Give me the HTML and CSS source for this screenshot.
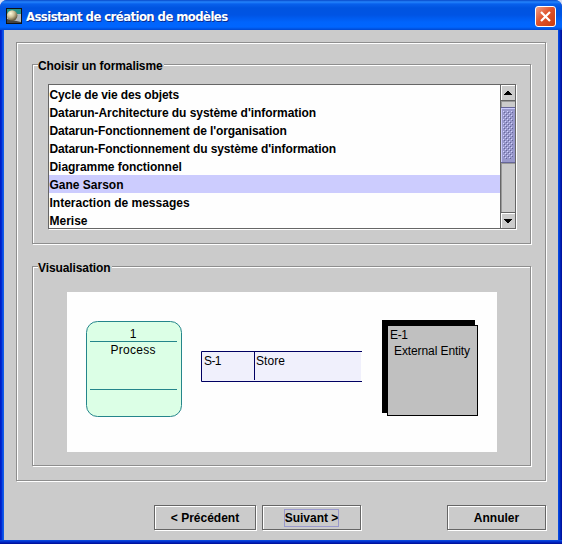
FILE: index.html
```
<!DOCTYPE html>
<html lang="fr">
<head>
<meta charset="utf-8">
<title>Assistant de création de modèles</title>
<link rel="stylesheet" href="styles.css">
</head>
<body>
<div class="window">
  <header class="titlebar">
    <svg class="app-icon" width="16" height="16" viewBox="0 0 16 16">
      <defs><radialGradient id="ball" cx=".35" cy=".3" r=".8"><stop offset="0" stop-color="#fffde0"/><stop offset=".45" stop-color="#cbbf96"/><stop offset="1" stop-color="#4a4028"/></radialGradient></defs>
      <rect width="16" height="16" fill="#111"/>
      <rect x="1" y="1" width="14" height="5" fill="#259088"/>
      <rect x="1" y="6" width="14" height="9" fill="#b4babc"/>
      <path d="M1 15V11L15 14V15Z" fill="#444"/>
      <circle cx="6.200" cy="7.500" r="5.200" fill="url(#ball)"/>
    </svg>
    <h1 class="title">Assistant de création de modèles</h1>
    <button class="close" aria-label="Fermer">
      <svg width="19" height="19" viewBox="0 0 19 19"><path d="M5 5L14 14M14 5L5 14" stroke="#fff" stroke-width="2.2"/></svg>
    </button>
  </header>
  <main class="content">
    <section class="panel">
      <section class="group group-list">
        <h2 class="legend legend-list">Choisir un formalisme</h2>
        <div class="listbox">
          <ul class="items">
            <li class="tighter">Cycle de vie des objets</li>
            <li class="tight">Datarun-Architecture du système d'information</li>
            <li class="tighter">Datarun-Fonctionnement de l'organisation</li>
            <li class="tighter">Datarun-Fonctionnement du système d'information</li>
            <li class="tight">Diagramme fonctionnel</li>
            <li class="selected">Gane Sarson</li>
            <li>Interaction de messages</li>
            <li>Merise</li>
          </ul>
          <div class="scrollbar">
            <div class="arrow up"><svg width="8" height="4" viewBox="0 0 8 4" shape-rendering="crispEdges"><path d="M3 0H5V1H6V2H7V3H8V4H0V3H1V2H2V1H3Z"/></svg></div>
            <div class="track-top"></div>
            <div class="thumb"><div class="grip"></div></div>
            <div class="track"></div>
            <div class="arrow down"><svg width="8" height="4" viewBox="0 0 8 4" shape-rendering="crispEdges"><path d="M0 0H8V1H7V2H6V3H5V4H3V3H2V2H1V1H0Z"/></svg></div>
          </div>
        </div>
      </section>
      <section class="group group-view">
        <h2 class="legend legend-view">Visualisation</h2>
        <svg class="canvas" width="430" height="160" viewBox="0 0 430 160">
          <rect width="430" height="160" fill="#fefefe"/>
          <rect x="19.5" y="29.5" width="95" height="95" rx="11" fill="#dcffe6" stroke="#24858b"/>
          <path d="M23 49.5H110M23 97.5H110" stroke="#24858b"/>
          <text x="66" y="46" text-anchor="middle">1</text>
          <text x="43.5" y="62" textLength="45">Process</text>
          <rect x="134" y="59" width="160" height="31" fill="#f0f0fc"/>
          <path d="M295 59.5H134.5V89.5H295M187.500 59V88" fill="none" stroke="#000062"/>
          <text x="137" y="73" textLength="17.500">S-1</text>
          <text x="189" y="73" textLength="29">Store</text>
          <rect x="315" y="28" width="93" height="93" fill="#000"/>
          <rect x="320.500" y="33.500" width="90" height="90" fill="#c0c0c0" stroke="#000"/>
          <text x="323" y="47" textLength="18">E-1</text>
          <text x="327" y="63" textLength="76">External Entity</text>
        </svg>
      </section>
    </section>
    <footer class="actions">
      <button class="btn btn-prev"><span>&lt; Précédent</span></button>
      <button class="btn btn-next"><span class="focus">Suivant &gt;</span></button>
      <button class="btn btn-cancel"><span>Annuler</span></button>
    </footer>
  </main>
</div>
</body>
</html>
```
FILE: styles.css
```
* { box-sizing: border-box; }
body {
  margin: 0;
  background: #d7dff5;
  font: bold 12px "Liberation Sans", Arial, sans-serif;
  color: #000;
}
h1, h2, ul { margin: 0; padding: 0; font-size: inherit; }
.window {
  width: 562px;
  height: 544px;
  display: flex;
  flex-direction: column;
  background: linear-gradient(90deg, #0018c0 0, #0030d8 2px, #1464f0 3px, #0c50e0 4px, #0c50e0 558px, #0040dc 559px, #0018a8 561px, #00109a 562px);
  border-radius: 7px 7px 0 0;
  overflow: hidden;
}
.window::after {
  content: "";
  height: 4px;
  background: linear-gradient(#0c50e0, #0028c8 50%, #000c90);
}
.titlebar {
  height: 30px;
  flex: none;
  display: flex;
  align-items: center;
  padding: 2px 6px 0;
  background: linear-gradient(#0848c8 0, #2484fc 2px, #0860ec 4px, #0054e0 8px, #0054e4 15px, #0064fc 22px, #0066ff 27px, #0048d0 30px);
}
.app-icon { flex: none; }
.title {
  flex: 1;
  margin-left: 4px;
  font: bold 13px "DejaVu Sans Condensed", "DejaVu Sans", sans-serif;
  color: #fff;
  text-shadow: 1px 1px #0a2d90;
  white-space: nowrap;
  letter-spacing: -0.58px;
}
.close {
  width: 21px;
  height: 21px;
  padding: 0;
  border: 1px solid #fff;
  border-radius: 3px;
  background: linear-gradient(135deg, #f0a088, #e0532c 45%, #c83c10);
}
.close svg { display: block; }
.content {
  flex: none;
  height: 510px;
  margin: 0 4px;
  padding: 12px 11px 0 12px;
  background: #cbcbcb;
}
.panel, .group {
  border: 1px solid #8e8e8e;
  box-shadow: inset 1px 1px #fff, 1px 1px #fff;
}
.panel { width: 530px; height: 439px; padding: 21px 15px; }
.group { width: 499px; padding: 0 14px 0 15px; }
.group-list { height: 180px; }
.group-view { height: 200px; margin-top: 22px; padding-left: 34px; }
.legend {
  width: max-content;
  height: 14px;
  line-height: 14px;
  margin: -6px 0 0 -10px;
  padding: 0 1px 0 0;
  background: #cbcbcb;
  white-space: nowrap;
  letter-spacing: -0.1px;
}
.legend-view { margin-left: -29px; }
.listbox {
  width: 468px;
  height: 145px;
  margin-top: 11px;
  display: flex;
  border: 1px solid #666;
  box-shadow: 1px 1px #fff;
  background: #fefefe;
}
.items { flex: 1; list-style: none; height: 143px; overflow: hidden; }
.items li { height: 18px; line-height: 20px; padding-left: 0.5px; white-space: nowrap; }
.items .tight { letter-spacing: -0.05px; }
.items .tighter { letter-spacing: -0.11px; }
.items .selected { background: #ccccfe; }
.scrollbar {
  width: 15px;
  display: flex;
  flex-direction: column;
  border-left: 1px solid #666;
  background: #cbcbcb;
}
.arrow {
  height: 15px;
  display: flex;
  align-items: center;
  justify-content: center;
  box-shadow: inset 1px 1px #fff;
}
.track-top { height: 7px; border-top: 1px solid #666; box-shadow: inset 1px 1px #999; }
.thumb {
  height: 56px;
  padding: 3px 2px;
  background: #9999cc;
  border: solid #666699;
  border-width: 1px 0;
  box-shadow: inset 1px 1px #ccccff;
}
.grip {
  height: 48px;
  background:
    radial-gradient(circle at 0.5px 0.5px, #d4d4ff 0.7px, transparent 0.8px) 0 0 / 4px 4px,
    radial-gradient(circle at 0.5px 0.5px, #d4d4ff 0.7px, transparent 0.8px) 2px 2px / 4px 4px,
    radial-gradient(circle at 0.5px 0.5px, #666699 0.7px, transparent 0.8px) 1px 1px / 4px 4px,
    radial-gradient(circle at 0.5px 0.5px, #666699 0.7px, transparent 0.8px) 3px 3px / 4px 4px;
}
.track { flex: 1; border-bottom: 1px solid #666; box-shadow: inset 1px 1px #999; }
.canvas {
  display: block;
  margin-top: 17px;
  font: 12px "Liberation Sans", Arial, sans-serif;
}
.actions { display: flex; margin-top: 24px; padding-left: 138px; }
.btn {
  height: 25px;
  width: 99px;
  padding: 0;
  font: inherit;
  color: inherit;
  background: #cbcbcb;
  border: 1px solid #666;
  border-radius: 0;
  box-shadow: inset 1px 1px #fff, 1px 1px #fff;
  white-space: nowrap;
}
.btn-prev { width: 102px; }
.btn-next { margin-left: 6px; }
.btn-cancel { margin-left: 86px; }
.focus { display: inline-block; height: 18px; line-height: 16px; border: 1px solid #9999cc; }
```
